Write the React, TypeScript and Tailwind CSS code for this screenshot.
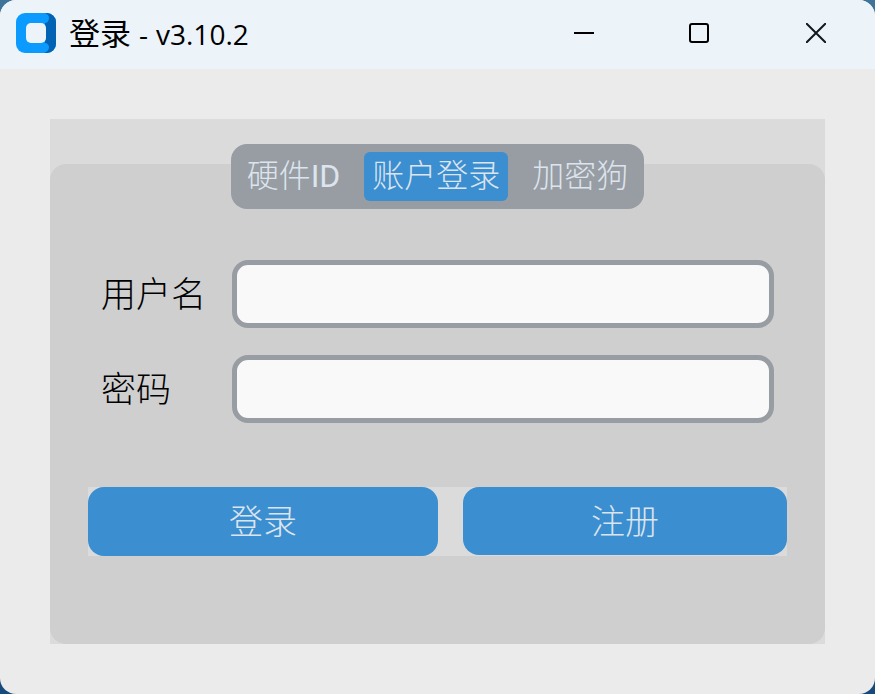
import { useState } from "react";
import type { InputHTMLAttributes } from "react";

const TABS = [
  { id: "hardware", text: "硬件", latin: "ID" },
  { id: "account", text: "账户登录", latin: "" },
  { id: "dongle", text: "加密狗", latin: "" },
];

function AppLogo() {
  return (
    <svg viewBox="0 0 40 40" className="size-10 shrink-0" aria-hidden="true">
      <rect width="40" height="40" rx="9" fill="#0b9bff" />
      <path d="M29 0h2a9 9 0 0 1 9 9v22a9 9 0 0 1-9 9h-3c3-1 5-3 5-6 0-2-2-4-4-4V10c2 0 4-2 4-5 0-2-1-4-4-5Z" fill="#0262b4" />
      <rect x="10" y="10" width="20" height="20" rx="5" fill="#ecf4fa" />
    </svg>
  );
}

function TitleBar() {
  return (
    <header className="flex h-[69px] shrink-0 items-center justify-between bg-[#ecf4fa] pl-4 font-['Open_Sans','Noto_Sans_CJK_SC',sans-serif] font-normal text-black">
      <div className="flex items-center gap-[13px] pb-[3px]">
        <AppLogo />
        <h1 className="flex items-baseline gap-2 text-[28px] leading-10 font-normal whitespace-nowrap">
          <span className="text-[31px]">登录</span>
          <span>-</span>
          <span>v3.10.2</span>
        </h1>
      </div>
      <div className="flex h-full pr-px pb-[3px]">
        <button type="button" aria-label="最小化" className="flex w-[115px] items-center justify-center">
          <svg viewBox="0 0 20 20" className="size-5" aria-hidden="true">
            <path d="M0 10h20" stroke="#000" strokeWidth="2" />
          </svg>
        </button>
        <button type="button" aria-label="最大化" className="flex w-[116px] items-center justify-center">
          <svg viewBox="0 0 20 20" className="size-5" aria-hidden="true">
            <rect x="1" y="1" width="18" height="18" rx="2" fill="none" stroke="#000" strokeWidth="2" />
          </svg>
        </button>
        <button type="button" aria-label="关闭" className="flex w-[117px] items-center justify-center">
          <svg viewBox="0 0 20 20" className="size-5" aria-hidden="true">
            <path d="M0 0l20 20M20 0L0 20" stroke="#111820" strokeWidth="2" />
          </svg>
        </button>
      </div>
    </header>
  );
}

function Field({ id, label, ...input }: { id: string; label: string } & InputHTMLAttributes<HTMLInputElement>) {
  return (
    <div className="flex items-center">
      <label htmlFor={id} className="w-[131px] shrink-0 pt-[3px] text-[35px] leading-10 text-black">
        {label}
      </label>
      <input
        id={id}
        {...input}
        className="h-[68px] min-w-0 flex-1 rounded-2xl border-5 border-[#979da2] bg-[#f9f9fa] px-3 text-[32px] text-black outline-none"
      />
    </div>
  );
}

export default function App() {
  const [active, setActive] = useState("account");

  return (
    <div className="min-h-screen bg-linear-to-b from-[#3f7399] to-[#164a7c] font-['Roboto','Noto_Sans_CJK_SC',sans-serif] font-light">
      <div className="flex min-h-screen flex-col overflow-hidden rounded-2xl bg-[#ebebeb]">
        <TitleBar />
        <main className="flex flex-1 flex-col p-[50px]">
          <div className="flex flex-1 flex-col bg-[#dbdbdb] pt-[25px]">
            <div role="tablist" className="z-10 -mb-[45px] flex gap-4 self-center rounded-2xl bg-[#979da2] p-2">
              {TABS.map(({ id, text, latin }) => (
                <button
                  key={id}
                  type="button"
                  role="tab"
                  aria-selected={id === active}
                  onClick={() => setActive(id)}
                  className={`h-[49px] rounded-md px-2 text-[32px] leading-[49px] whitespace-nowrap text-[#dce4ee] ${
                    id === active ? "bg-[#3b8ed0]" : ""
                  }`}
                >
                  {text}
                  {latin && <span className="font-normal">{latin}</span>}
                </button>
              ))}
            </div>
            <form
              className="flex-1 rounded-2xl bg-[#cfcfcf] px-[38px] pt-24 pb-12"
              onSubmit={(event) => event.preventDefault()}
            >
              <div className="flex flex-col gap-[27px] px-[13px]">
                <Field id="username" label="用户名" type="text" autoComplete="username" />
                <Field id="password" label="密码" type="password" autoComplete="current-password" />
              </div>
              <div className="mt-16 flex gap-[25px] bg-[#dbdbdb] text-[34px] text-[#dce4ee]">
                <button type="submit" className="h-[69px] flex-[350] rounded-2xl bg-[#3b8ed0] pt-0.5">
                  登录
                </button>
                <button type="button" className="h-[68px] flex-[324] rounded-2xl bg-[#3b8ed0] pt-0.5">
                  注册
                </button>
              </div>
            </form>
          </div>
        </main>
      </div>
    </div>
  );
}
